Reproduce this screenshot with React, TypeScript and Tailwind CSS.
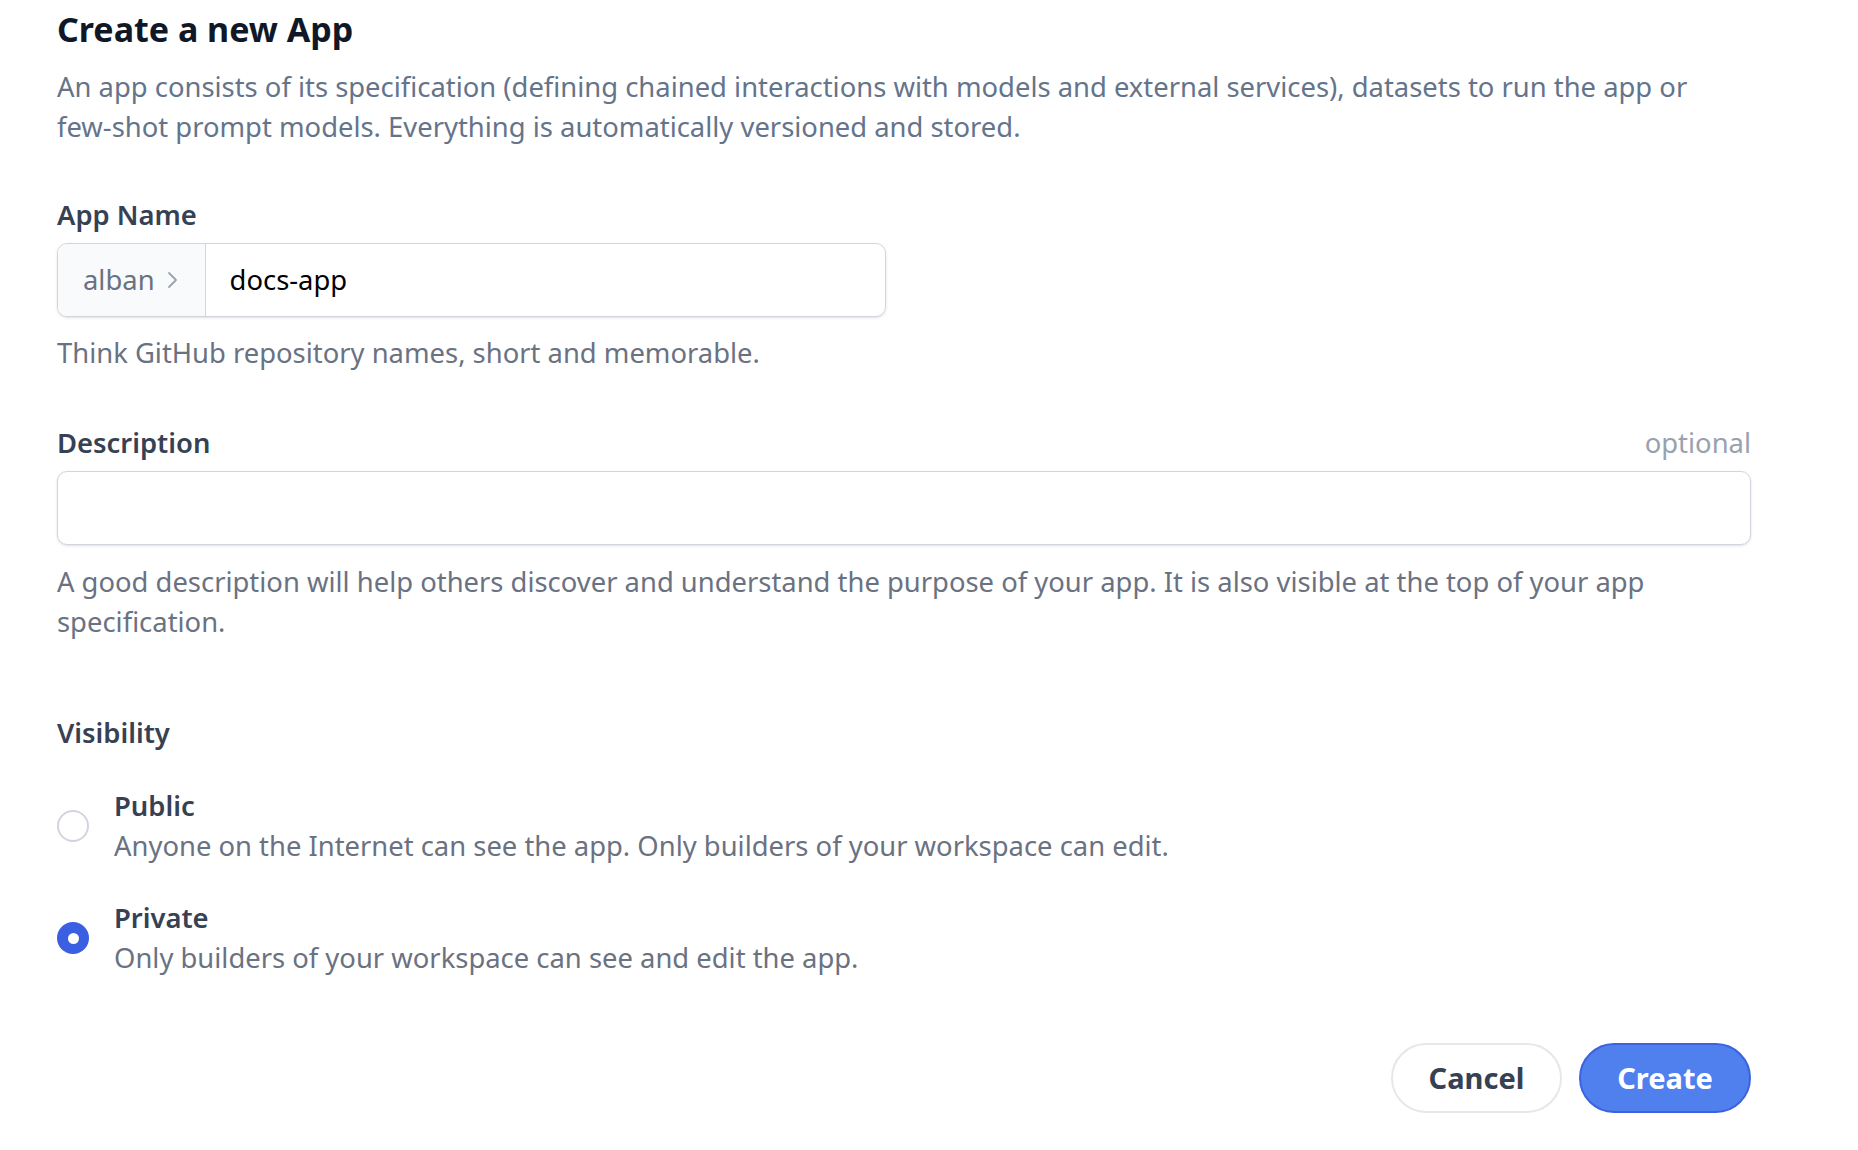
import { useState } from "react";

function Radio({ checked }: { checked: boolean }) {
  return checked ? (
    <span className="flex h-[32px] w-[32px] shrink-0 items-center justify-center rounded-full bg-[#3b5fe3]">
      <span className="h-[11px] w-[11px] rounded-full bg-white" />
    </span>
  ) : (
    <span className="h-[32px] w-[32px] shrink-0 rounded-full border-2 border-gray-300 bg-white" />
  );
}

export default function App() {
  const [visibility, setVisibility] = useState<"public" | "private">("private");

  const options = [
    {
      id: "public" as const,
      title: "Public",
      text: "Anyone on the Internet can see the app. Only builders of your workspace can edit.",
    },
    {
      id: "private" as const,
      title: "Private",
      text: "Only builders of your workspace can see and edit the app.",
    },
  ];

  return (
    <div className="min-h-[1150px] bg-white pl-[57px] pt-[6px] [font-family:'Noto_Sans',sans-serif]">
      <div className="w-[1694px]">
        <h1 className="text-[34px] leading-[47px] font-bold text-gray-900">Create a new App</h1>
        <p className="mt-[14px] text-[27.4px] leading-[40px] text-[#64748b]">
          An app consists of its specification (defining chained interactions with models and external
          services), datasets to run the app or <span className="whitespace-nowrap">few-shot</span> prompt
          models. Everything is automatically versioned and stored.
        </p>

        <div className="mt-[48px]">
          <label className="block text-[27.4px] leading-[40px] font-semibold text-gray-700">App Name</label>
          <div className="mt-[8px] flex h-[74px] w-[829px] overflow-hidden rounded-[10px] border border-gray-300 shadow-sm">
            <div className="flex items-center gap-[12px] border-r border-gray-300 bg-gray-50 pl-[25px] pr-[26px] text-[27.4px] text-gray-500">
              alban
              <svg width="12" height="18" viewBox="0 0 12 18" fill="none">
                <path d="M2 2l7 7-7 7" stroke="#9ca3af" strokeWidth="1.8" strokeLinecap="round" strokeLinejoin="round" />
              </svg>
            </div>
            <input
              defaultValue="docs-app"
              className="flex-1 px-[24px] text-[27.4px] text-black outline-none"
            />
          </div>
          <p className="mt-[16px] text-[27.4px] leading-[40px] text-gray-500">
            Think GitHub repository names, short and memorable.
          </p>
        </div>

        <div className="mt-[50px]">
          <div className="flex items-center justify-between">
            <label className="text-[27.4px] leading-[40px] font-semibold text-gray-700">Description</label>
            <span className="text-[27.4px] leading-[40px] text-gray-400">optional</span>
          </div>
          <input className="mt-[8px] block h-[74px] w-full rounded-[10px] border border-gray-300 px-[20px] text-[27.4px] shadow-sm outline-none" />
          <p className="mt-[17px] text-[27.4px] leading-[40px] text-gray-500">
            A good description will help others discover and understand the purpose of your app. It is also
            visible at the top of your app specification.
          </p>
        </div>

        <div className="mt-[71px]">
          <div className="text-[27.4px] leading-[40px] font-semibold text-gray-700">Visibility</div>
          <div className="mt-[33px] flex flex-col gap-[32px]">
            {options.map((o) => (
              <div
                key={o.id}
                onClick={() => setVisibility(o.id)}
                className="flex cursor-pointer items-center gap-[25px]"
              >
                <Radio checked={visibility === o.id} />
                <div>
                  <div className="text-[27.4px] leading-[40px] font-semibold text-gray-700">{o.title}</div>
                  <div className="text-[27.4px] leading-[40px] text-gray-500">{o.text}</div>
                </div>
              </div>
            ))}
          </div>
        </div>

        <div className="mt-[65px] flex justify-end gap-[17px]">
          <button className="h-[70px] w-[171px] rounded-full border-2 border-gray-200 bg-white text-[29px] font-bold text-gray-700">
            Cancel
          </button>
          <button className="h-[70px] w-[172px] rounded-full border-2 border-[#3b62e0] bg-[#4f80ee] text-[29px] font-bold text-white">
            Create
          </button>
        </div>
      </div>
    </div>
  );
}
